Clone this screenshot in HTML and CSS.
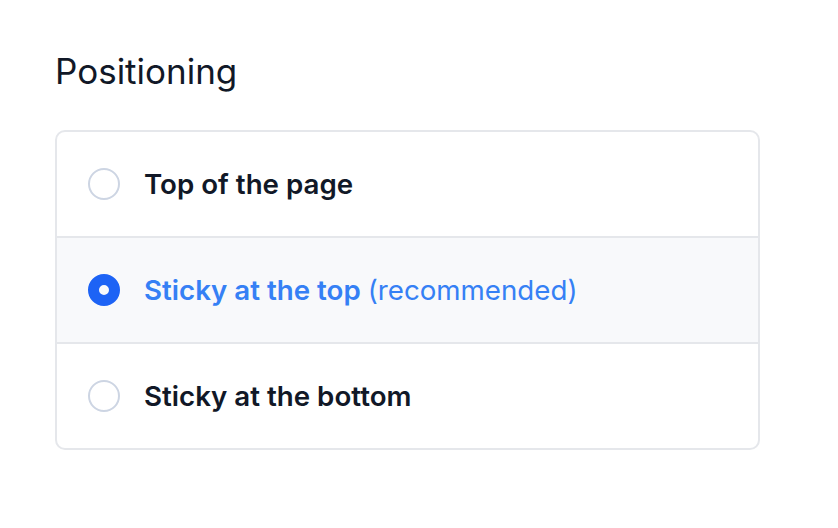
FILE: index.html
```html
<!DOCTYPE html>
<html>
<head>
<meta charset="utf-8">
<link rel="stylesheet" href="styles.css">
</head>
<body>
<div class="wrap">
  <h2 class="title">Positioning</h2>
  <div class="card">
    <label class="row">
      <span class="radio"></span>
      <span class="label">Top of the page</span>
    </label>
    <label class="row selected">
      <span class="radio"></span>
      <span class="label">Sticky at the top <span class="note">(recommended)</span></span>
    </label>
    <label class="row">
      <span class="radio"></span>
      <span class="label">Sticky at the bottom</span>
    </label>
  </div>
</div>
</body>
</html>
```
FILE: styles.css
```css
html, body {
  margin: 0;
  padding: 0;
  background: #ffffff;
  font-family: Inter, "Noto Sans", sans-serif;
}
.wrap {
  padding: 50px 78px 0 55px;
}
.title {
  margin: 0 0 38px 0;
  font-size: 35px;
  line-height: 42px;
  font-weight: 400;
  color: #111827;
}
.card {
  border: 2px solid #e5e7eb;
  border-radius: 10px;
  overflow: hidden;
}
.row {
  display: flex;
  align-items: center;
  height: 104px;
  padding-left: 31px;
  gap: 24px;
  border-top: 2px solid #e5e7eb;
  box-sizing: content-box;
}
.row:first-child {
  border-top: none;
}
.row.selected {
  background: #f8f9fb;
}
.radio {
  width: 32px;
  height: 32px;
  border: 2px solid #cdd5e3;
  border-radius: 50%;
  box-sizing: border-box;
  flex: none;
}
.selected .radio {
  border: 11px solid #1d63f5;
}
.label {
  font-size: 27.7px;
  font-weight: 600;
  color: #111827;
}
.selected .label {
  color: #3580f5;
}
.note {
  font-weight: 400;
}
```
